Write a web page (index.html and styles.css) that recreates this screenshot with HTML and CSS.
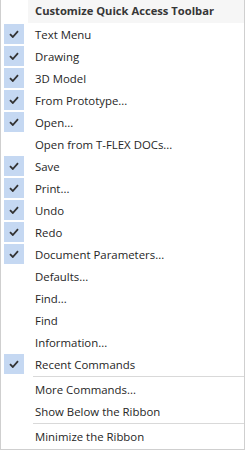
FILE: index.html
```html
<!DOCTYPE html>
<html>
<head>
<meta charset="utf-8">
<link rel="stylesheet" href="styles.css">
</head>
<body>
<div class="menu">
  <div class="header"><span class="gutter"></span><span class="title">Customize Quick Access Toolbar</span></div>
  <div class="item checked"><span class="box"><svg viewBox="0 0 10 8" width="10" height="8"><path d="M1 4.2 L3.8 7 L9 1.2" fill="none" stroke="#333" stroke-width="1.8"/></svg></span><span class="label">Text Menu</span></div>
  <div class="item checked"><span class="box"><svg viewBox="0 0 10 8" width="10" height="8"><path d="M1 4.2 L3.8 7 L9 1.2" fill="none" stroke="#333" stroke-width="1.8"/></svg></span><span class="label">Drawing</span></div>
  <div class="item checked"><span class="box"><svg viewBox="0 0 10 8" width="10" height="8"><path d="M1 4.2 L3.8 7 L9 1.2" fill="none" stroke="#333" stroke-width="1.8"/></svg></span><span class="label">3D Model</span></div>
  <div class="item checked"><span class="box"><svg viewBox="0 0 10 8" width="10" height="8"><path d="M1 4.2 L3.8 7 L9 1.2" fill="none" stroke="#333" stroke-width="1.8"/></svg></span><span class="label">From Prototype...</span></div>
  <div class="item checked"><span class="box"><svg viewBox="0 0 10 8" width="10" height="8"><path d="M1 4.2 L3.8 7 L9 1.2" fill="none" stroke="#333" stroke-width="1.8"/></svg></span><span class="label">Open...</span></div>
  <div class="item"><span class="box"></span><span class="label">Open from T-FLEX DOCs...</span></div>
  <div class="item checked"><span class="box"><svg viewBox="0 0 10 8" width="10" height="8"><path d="M1 4.2 L3.8 7 L9 1.2" fill="none" stroke="#333" stroke-width="1.8"/></svg></span><span class="label">Save</span></div>
  <div class="item checked"><span class="box"><svg viewBox="0 0 10 8" width="10" height="8"><path d="M1 4.2 L3.8 7 L9 1.2" fill="none" stroke="#333" stroke-width="1.8"/></svg></span><span class="label">Print...</span></div>
  <div class="item checked"><span class="box"><svg viewBox="0 0 10 8" width="10" height="8"><path d="M1 4.2 L3.8 7 L9 1.2" fill="none" stroke="#333" stroke-width="1.8"/></svg></span><span class="label">Undo</span></div>
  <div class="item checked"><span class="box"><svg viewBox="0 0 10 8" width="10" height="8"><path d="M1 4.2 L3.8 7 L9 1.2" fill="none" stroke="#333" stroke-width="1.8"/></svg></span><span class="label">Redo</span></div>
  <div class="item checked"><span class="box"><svg viewBox="0 0 10 8" width="10" height="8"><path d="M1 4.2 L3.8 7 L9 1.2" fill="none" stroke="#333" stroke-width="1.8"/></svg></span><span class="label">Document Parameters...</span></div>
  <div class="item"><span class="box"></span><span class="label">Defaults...</span></div>
  <div class="item"><span class="box"></span><span class="label">Find...</span></div>
  <div class="item"><span class="box"></span><span class="label">Find</span></div>
  <div class="item"><span class="box"></span><span class="label">Information...</span></div>
  <div class="item checked"><span class="box"><svg viewBox="0 0 10 8" width="10" height="8"><path d="M1 4.2 L3.8 7 L9 1.2" fill="none" stroke="#333" stroke-width="1.8"/></svg></span><span class="label">Recent Commands</span></div>
  <div class="sep"></div>
  <div class="item"><span class="box"></span><span class="label">More Commands...</span></div>
  <div class="item"><span class="box"></span><span class="label">Show Below the Ribbon</span></div>
  <div class="sep"></div>
  <div class="item"><span class="box"></span><span class="label">Minimize the Ribbon</span></div>
</div>
</body>
</html>
```

FILE: styles.css
```css
html, body {
  margin: 0;
  padding: 0;
  background: #fff;
}
.menu {
  width: 245px;
  height: 450px;
  box-sizing: border-box;
  border-left: 1px solid #cfcfcf;
  border-right: 1px solid #cfcfcf;
  border-bottom: 1px solid #cfcfcf;
  font-family: "Open Sans", "Noto Sans", sans-serif;
  font-size: 11.4px;
  color: #262626;
  background: #fff;
}
.header {
  display: flex;
  height: 23px;
}
.gutter {
  width: 27px;
  flex: none;
}
.title {
  flex: 1;
  background: #f6f6f6;
  font-weight: bold;
  font-size: 11.2px;
  color: #363636;
  padding-left: 7px;
  line-height: 22px;
}
.item {
  display: flex;
  align-items: center;
  height: 22px;
}
.box {
  width: 20px;
  height: 20px;
  margin-left: 3px;
  margin-right: 11px;
  flex: none;
  display: flex;
  align-items: center;
  justify-content: center;
}
.checked .box {
  background: #c5d8f2;
}
.label {
  white-space: nowrap;
}
.sep {
  height: 1px;
  margin: 1px 0 1px 32px;
  background: #d9d9d9;
}
```
